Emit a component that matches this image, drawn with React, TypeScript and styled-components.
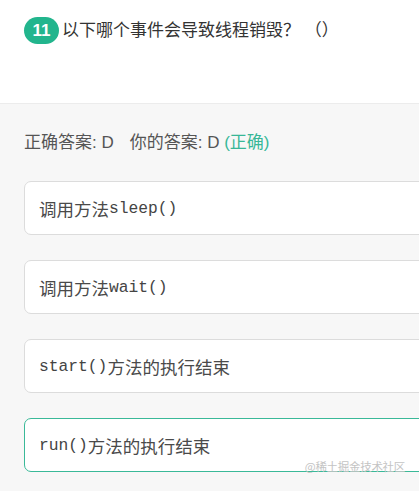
import React from "react";
import styled, { createGlobalStyle } from "styled-components";

const Global = createGlobalStyle`
  html, body { margin: 0; padding: 0; }
  body {
    background: #f7f7f7;
    font-family: "Liberation Sans", "Noto Sans CJK SC", sans-serif;
    overflow: hidden;
  }
`;

const Page = styled.div`
  position: relative;
  width: 419px;
  height: 491px;
  overflow: hidden;
  background: #f7f7f7;
`;

const Header = styled.div`
  height: 104px;
  box-sizing: border-box;
  background: #fff;
  border-bottom: 1px solid #ececec;
  padding: 17px 24px 0;
  display: flex;
  align-items: flex-start;
  gap: 3px;
`;

const Badge = styled.span`
  flex: none;
  width: 35px;
  height: 27px;
  border-radius: 14px;
  background: #22b58d;
  color: #fff;
  font-family: "Liberation Sans", Arial, sans-serif;
  font-weight: bold;
  font-size: 17px;
  display: flex;
  align-items: center;
  justify-content: center;
`;

const Question = styled.span`
  font-size: 17px;
  line-height: 27px;
  color: #333;
`;

const Body = styled.div`
  padding: 27px 0 0 24px;
`;

const AnswerLine = styled.div`
  font-size: 17px;
  line-height: 24px;
  color: #555;
  display: flex;
  gap: 16px;
`;

const Right = styled.span`
  color: #38b797;
`;

const Options = styled.div`
  margin-top: 26px;
  margin-right: -40px;
  display: flex;
  flex-direction: column;
  gap: 25px;
`;

const Option = styled.div<{ $selected?: boolean }>`
  height: 54px;
  box-sizing: border-box;
  background: #fff;
  border: 1px solid ${(p) => (p.$selected ? "#3ab998" : "#dcdcdc")};
  border-radius: 7px;
  padding: 0 14px;
  display: flex;
  align-items: center;
  font-family: "Liberation Mono", "Courier New", monospace;
  font-size: 16.3px;
  color: #444;
  white-space: pre;
`;

const Han = styled.span`
  font-family: "Noto Sans CJK SC", sans-serif;
  font-size: 17.5px;
  color: #4a4a4a;
`;

const Watermark = styled.div`
  position: absolute;
  right: 14px;
  bottom: 17px;
  font-family: "Noto Sans CJK SC", sans-serif;
  font-size: 11.5px;
  color: #c4c4c4;
  letter-spacing: -0.3px;
`;

const options: { parts: [string, boolean][]; selected?: boolean }[] = [
  { parts: [["调用方法", true], ["sleep()", false]] },
  { parts: [["调用方法", true], ["wait()", false]] },
  { parts: [["start()", false], ["方法的执行结束", true]] },
  { parts: [["run()", false], ["方法的执行结束", true]], selected: true },
];

export default function App() {
  return (
    <Page>
      <Global />
      <Header>
        <Badge>11</Badge>
        <Question>以下哪个事件会导致线程销毁？ （）</Question>
      </Header>
      <Body>
        <AnswerLine>
          <span>正确答案: D</span>
          <span>
            你的答案: D <Right>(正确)</Right>
          </span>
        </AnswerLine>
        <Options>
          {options.map((o, i) => (
            <Option key={i} $selected={o.selected}>
              {o.parts.map(([t, han], j) => (han ? <Han key={j}>{t}</Han> : <span key={j}>{t}</span>))}
            </Option>
          ))}
        </Options>
      </Body>
      <Watermark>@稀土掘金技术社区</Watermark>
    </Page>
  );
}
